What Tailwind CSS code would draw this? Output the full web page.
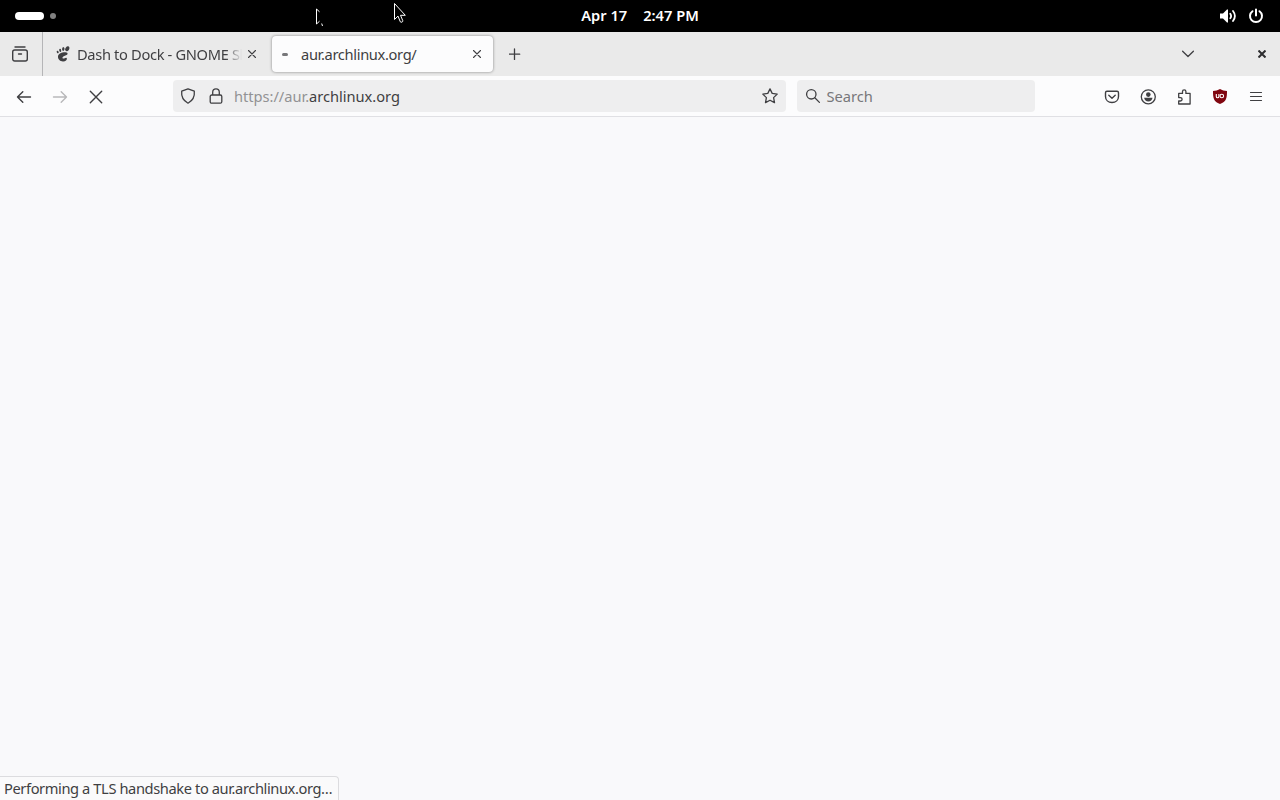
<!DOCTYPE html>
<html lang="en">
<head>
    <meta charset="UTF-8">
    <meta name="viewport" content="width=device-width, initial-scale=1.0">
    <title>aur.archlinux.org/</title>
    <script src="https://cdn.jsdelivr.net/npm/@tailwindcss/browser@4"></script>
</head>
<body class="h-screen overflow-hidden bg-[#f9f9fb] font-['Noto_Sans',sans-serif] text-[14.67px] leading-5 text-[#3f3f42]">
    <div class="relative flex h-full flex-col">
        <!-- Top bar -->
        <header class="grid h-8 shrink-0 grid-cols-3 items-center bg-black text-white">
            <div class="flex items-center gap-[6px] pl-[15px]">
                <span class="h-2 w-[29px] rounded-full bg-white"></span>
                <span class="size-[6px] rounded-full bg-[#808080]"></span>
            </div>
            <div class="flex justify-center gap-4 pb-0.5 text-[14.67px] font-semibold whitespace-nowrap">
                <span>Apr 17</span>
                <span>2:47 PM</span>
            </div>
            <div class="flex items-center justify-end gap-[11px] pr-4">
                <svg class="h-4 w-[17px]" viewBox="0 0 17 16" fill="none" stroke="currentColor" stroke-width="1.8" stroke-linecap="round">
                    <path d="M0 5.5h3L7 1.5h1v13H7l-4-4H0z" fill="currentColor" stroke="none"/>
                    <path d="M10.3 5.7q1.6 2.3 0 4.6M13 3q3.800 5 0 10"/>
                </svg>
                <svg class="size-4" viewBox="0 0 16 16" fill="none" stroke="currentColor" stroke-width="2" stroke-linecap="round">
                    <path d="M4.500 3.200a6 6 0 1 0 7 0M8 1.500v6"/>
                </svg>
            </div>
        </header>

        <!-- Tabs -->
        <nav class="flex h-11 shrink-0 items-center bg-[#eaeaea]">
            <div class="flex h-full w-[43px] items-center border-r border-[#b5b5b7] pl-3">
                <svg class="size-4" viewBox="0 0 16 16" fill="none" stroke="currentColor" stroke-width="1.4" stroke-linecap="round">
                    <path d="M3 1h10"/>
                    <rect x=".7" y="4" width="14.600" height="11" rx="2"/>
                    <path d="M6.500 8h3"/>
                </svg>
            </div>
            <div class="flex w-[224px] items-center pl-3">
                <svg class="size-4 shrink-0" viewBox="0 0 16 16" fill="currentColor">
                    <ellipse cx="12.300" cy="2.700" rx="1.900" ry="2.600" transform="rotate(25 12.300 2.700)"/>
                    <ellipse cx="8.300" cy="3" rx="1.200" ry="1.900" transform="rotate(10 8.300 3)"/>
                    <ellipse cx="5.200" cy="4.300" rx="1" ry="1.600" transform="rotate(-10 5.200 4.300)"/>
                    <ellipse cx="2.700" cy="6" rx=".9" ry="1.400" transform="rotate(-25 2.700 6)"/>
                    <path d="M12.500 7.300C11.500 5.300 3.500 6.300 3 10.200c-.3 3.300 2.700 5.400 5.200 5.200 2.300-.2 4-1.700 3.700-3-.3-1.200-1.600-.2-2.800.1-1.500.4-2.100-.6-1.300-1.500C9 9.700 13.300 9.300 12.500 7.300z"/>
                </svg>
                <span class="ml-[6px] w-[165px] overflow-hidden tracking-[-0.34px] whitespace-nowrap mask-r-from-90% mask-r-to-100%">Dash to Dock - GNOME Shell</span>
                <svg class="ml-[6px] size-2 shrink-0" viewBox="0 0 8 8" fill="none" stroke="currentColor" stroke-width="1.100" stroke-linecap="round"><path d="M.5.5l7 7M7.500.5l-7 7"/></svg>
            </div>
            <div class="ml-[5px] flex h-9 w-[221px] items-center rounded-[4px] bg-[#fcfcfd] pl-[10px] shadow-[0_0_3px_rgba(0,0,0,0.45)]">
                <span class="h-[3px] w-[6px] rounded-full bg-[#77777a]"></span>
                <span class="ml-[13px] w-[172px] tracking-[-0.34px]">aur.archlinux.org/</span>
                <svg class="size-2 shrink-0" viewBox="0 0 8 8" fill="none" stroke="currentColor" stroke-width="1.100" stroke-linecap="round"><path d="M.5.5l7 7M7.500.5l-7 7"/></svg>
            </div>
            <svg class="ml-4 size-3" viewBox="0 0 12 12" fill="none" stroke="currentColor" stroke-width="1.300" stroke-linecap="round"><path d="M5.500 1v10.400M.3 6.200h10.400"/></svg>
            <div class="ml-auto flex items-center gap-[64px] pr-[14px]">
                <svg class="h-2 w-3" viewBox="0 0 12 8" fill="none" stroke="currentColor" stroke-width="1.300" stroke-linecap="round" stroke-linejoin="round"><path d="M.6 1.200L6 6.500l5.400-5.300"/></svg>
                <svg class="size-2" viewBox="0 0 8 8" fill="none" stroke="#2e2e30" stroke-width="2"><path d="M.5.5l7 7M7.500.5l-7 7"/></svg>
            </div>
        </nav>

        <!-- Toolbar -->
        <div class="flex h-[41px] shrink-0 items-center border-b border-[#e0e0e4] bg-[#fcfcfd] pl-4">
            <div class="flex items-center gap-5 pt-0.5">
                <svg class="size-4" viewBox="0 0 16 16" fill="none" stroke="currentColor" stroke-width="1.400" stroke-linecap="round" stroke-linejoin="round"><path d="M14.500 8H1.500M6.800 2.700L1.500 8l5.300 5.300"/></svg>
                <svg class="size-4 text-[#b8b8ba]" viewBox="0 0 16 16" fill="none" stroke="currentColor" stroke-width="1.400" stroke-linecap="round" stroke-linejoin="round"><path d="M1.500 8h13M9.200 2.700L14.500 8l-5.300 5.300"/></svg>
                <svg class="size-4" viewBox="0 0 16 16" fill="none" stroke="currentColor" stroke-width="1.400" stroke-linecap="round"><path d="M2.300 2.300l11.400 11.400M13.700 2.300L2.300 13.700"/></svg>
            </div>
            <div class="ml-[69px] flex h-8 w-[613px] items-center rounded-[4px] bg-[#eeeeef] pr-2 pl-[7px]">
                <svg class="size-4" viewBox="0 0 16 16" fill="none" stroke="currentColor" stroke-width="1.300" stroke-linejoin="round"><path d="M8 .8L14.300 3.200c.5 4.500-1 9-6.300 12C2.700 12.200 1.200 7.700 1.700 3.200z"/></svg>
                <svg class="ml-3 size-4" viewBox="0 0 16 16" fill="none" stroke="currentColor" stroke-width="1.300"><rect x="2.200" y="7" width="11.600" height="8.200" rx="1.500"/><path d="M4.700 7V4.200a3.300 3.300 0 0 1 6.600 0V7"/></svg>
                <span class="ml-[10px] flex-1 tracking-[-0.03px] text-[#929294]">https://aur.<span class="text-[#3f3f42]">archlinux.org</span></span>
                <svg class="size-4" viewBox="0 0 16 16" fill="none" stroke="currentColor" stroke-width="1.300" stroke-linejoin="round"><path d="M8 .9l2.200 4.500 5 .7-3.600 3.500.9 5-4.500-2.400-4.500 2.400.9-5L.8 6.100l5-.7z"/></svg>
            </div>
            <div class="ml-[11px] flex h-8 w-[238px] items-center rounded-[4px] bg-[#eeeeef] pl-2">
                <svg class="size-4" viewBox="0 0 16 16" fill="none" stroke="currentColor" stroke-width="1.300" stroke-linecap="round"><circle cx="6.300" cy="6.300" r="4.700"/><path d="M9.800 9.800l4.600 4.600"/></svg>
                <span class="ml-[5.5px] text-[#77777a]">Search</span>
            </div>
            <div class="ml-auto flex items-center gap-5 pt-px pr-4">
                <svg class="size-4" viewBox="0 0 16 16" fill="none" stroke="currentColor" stroke-width="1.400" stroke-linecap="round" stroke-linejoin="round"><path d="M3 2.200h10c1 0 1.500.5 1.500 1.500V7.500c0 3.500-2.700 6-6.500 6s-6.500-2.500-6.500-6V3.700c0-1 .5-1.500 1.500-1.500z"/><path d="M4.800 6.300L8 9.200l3.200-2.900"/></svg>
                <svg class="size-4" viewBox="0 0 16 16" fill="none" stroke="currentColor" stroke-width="1.300"><circle cx="8.300" cy="7.800" r="7"/><circle cx="8.300" cy="5.600" r="2.300" fill="currentColor" stroke="none"/><path d="M4.100 8.800h8.400c-.3 2.300-2 3.700-4.200 3.700S4.400 11.100 4.100 8.800z" fill="currentColor" stroke="none"/></svg>
                <svg class="size-4" viewBox="0 0 16 16" fill="none" stroke="currentColor" stroke-width="1.300" stroke-linejoin="round"><path d="M2.700 7V4.400h3.800V2.500a1.700 1.700 0 0 1 3.400 0v1.900h4.200v10.600H2.700v-3h1.700a1.700 1.700 0 0 0 0-3.400H2.700z"/></svg>
                <svg class="size-4" viewBox="0 0 16 16"><path d="M8 0c2 1.300 4.500 2 7 2 0 7-.5 10.500-7 13C1.500 12.500 1 9 1 2c2.500 0 5-.7 7-2z" fill="#800610"/><path d="M4.300 5v2.500a1.300 1.300 0 0 0 2.600 0V5" fill="none" stroke="#fff" stroke-width="1.100"/><circle cx="9.800" cy="7" r="1.800" fill="none" stroke="#fff" stroke-width="1.100"/></svg>
                <svg class="size-4" viewBox="0 0 16 16" fill="none" stroke="currentColor" stroke-width="1.200" stroke-linecap="round"><path d="M2.500 3.500h11M2.500 7.500h11M2.500 11.500h11"/></svg>
            </div>
        </div>

        <!-- Page content -->
        <main class="flex flex-1 items-end">
            <div class="flex h-6 w-[339px] items-center rounded-tr-[4px] border-t border-r border-[#dcdcdf] bg-[#fafafb] pb-px pl-1 tracking-[-0.4px] whitespace-nowrap">Performing a TLS handshake to aur.archlinux.org…</div>
        </main>

        <!-- Mouse pointer and its trail -->
        <svg class="absolute top-[8px] left-[315px] h-5 w-3" viewBox="0 0 12 20" fill="none" stroke="#fff" stroke-width="1"><path d="M4.500 3.800L1.500 1v15l3-2.800M6.700 15.500l.8 2.500"/></svg>
        <svg class="absolute top-[2px] left-[393px] h-[22px] w-[14px]" viewBox="0 0 14 22" fill="#000" stroke="#fff" stroke-width="1"><path d="M1.500 1.500v16l3.500-3.400 2.300 5.700c.6 1 2.900.2 2.500-1.100L7.500 13.300h4.800z"/></svg>
    </div>
</body>
</html>
